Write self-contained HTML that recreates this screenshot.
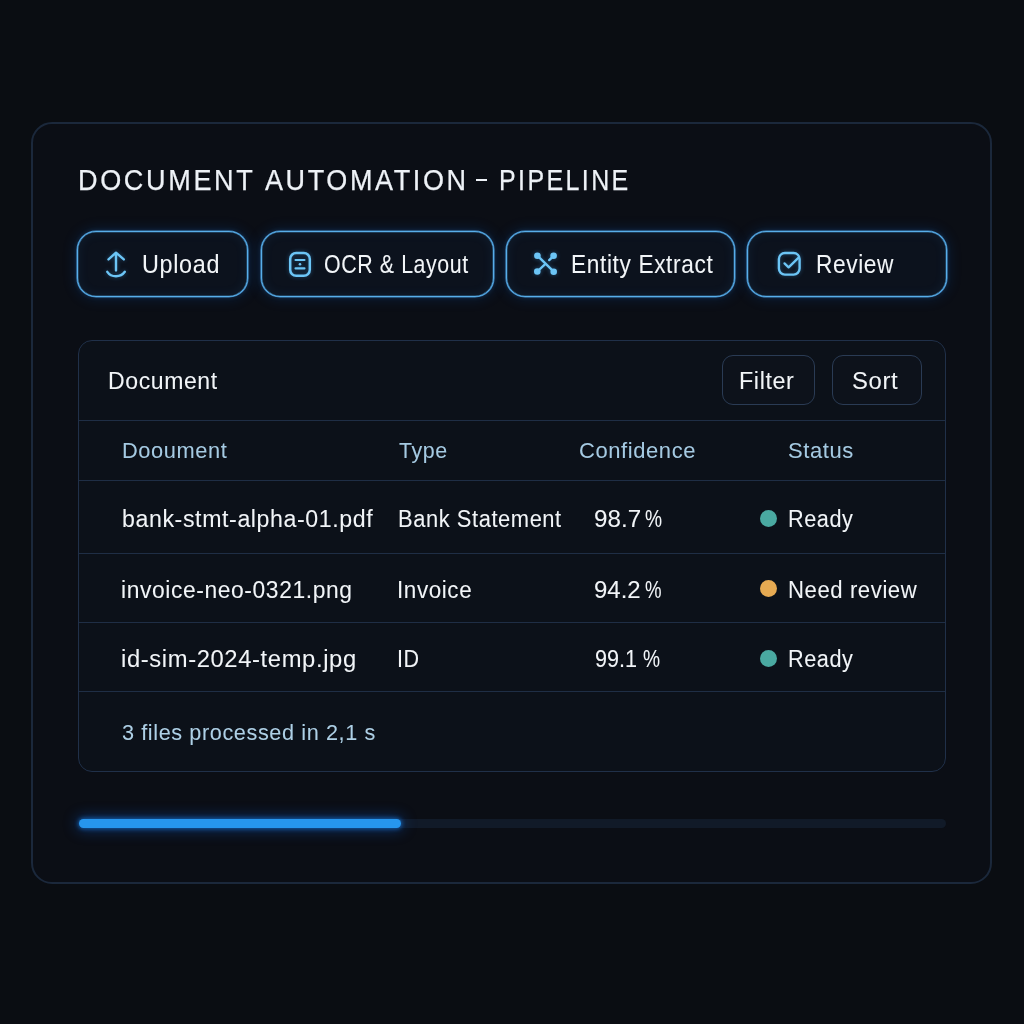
<!DOCTYPE html>
<html><head><meta charset="utf-8">
<style>
html,body{margin:0;padding:0}
body{width:1024px;height:1024px;background:#0a0d12;position:relative;overflow:hidden;font-family:"Liberation Sans",sans-serif}
.abs{position:absolute;box-sizing:border-box}
.t{position:absolute;white-space:nowrap;line-height:1;transform-origin:0 0;-webkit-text-stroke:0.05px currentColor}
#t1,#t2,#t3{-webkit-text-stroke:0.25px currentColor}
.card{left:31px;top:122px;width:961px;height:762px;border:2px solid #1b283b;border-radius:21px;background:#0b0e15}
.btn{top:231px;height:66px;border:1px solid #58aeea;border-radius:19px;background:#0c121d;box-shadow:0 0 0 0.6px rgba(85,175,240,0.75), 0 0 5px 0 rgba(50,150,240,0.24), 0 0 14px 2px rgba(20,100,210,0.16), inset 0 0 0 0.5px rgba(85,175,240,0.5), inset 0 0 12px rgba(60,150,240,0.10)}
.tbl{left:78px;top:340px;width:868px;height:432px;border:1px solid #203049;border-radius:14px;background:#0c1119}
.sep{left:79px;width:866px;height:1px;background:#1f2e45}
.sbtn{top:355px;height:50px;border:1px solid #2a3b54;border-radius:11px;background:#0d121b}
.dot{width:17px;height:17px;border-radius:50%}
.track{left:79px;top:819px;width:867px;height:9px;border-radius:5px;background:#111a28}
.fill{left:79px;top:819px;width:322px;height:9px;border-radius:5px;background:#2696ee;box-shadow:0 0 4px 1px rgba(30,140,250,0.55),0 0 14px 3px rgba(15,100,230,0.35)}
</style></head><body>
<div class="abs card"></div>
<div class="abs btn" style="left:77px;width:171px"></div>
<div class="abs btn" style="left:261px;width:233px"></div>
<div class="abs btn" style="left:506px;width:229px"></div>
<div class="abs btn" style="left:747px;width:200px"></div>
<div class="abs tbl"></div>
<div class="abs sbtn" style="left:722px;width:93px"></div>
<div class="abs sbtn" style="left:832px;width:90px"></div>
<div class="abs sep" style="top:420px"></div>
<div class="abs sep" style="top:480px"></div>
<div class="abs sep" style="top:553px"></div>
<div class="abs sep" style="top:622px"></div>
<div class="abs sep" style="top:691px"></div>
<div class="abs dot" style="left:760px;top:510px;background:#4aa9a1"></div>
<div class="abs dot" style="left:760px;top:580px;background:#e6aa52"></div>
<div class="abs dot" style="left:760px;top:650px;background:#4aa9a1"></div>
<div class="abs track"></div>
<div class="abs fill"></div>
<svg class="abs" style="left:0;top:0;filter:drop-shadow(0 0 2px rgba(70,170,245,0.4))" width="1024" height="1024" viewBox="0 0 1024 1024" fill="none" stroke="#6cc5f6" stroke-linecap="round" stroke-linejoin="round">
<path stroke-width="2.4" d="M108.5 259.4 L116 252.7 L123.8 259.4 M116 253.2 V270.4 M107.3 271.8 C109.8 275.5 112.4 276.2 116 276.2 C119.6 276.2 122.2 275.5 124.8 271.8"/>
<rect x="290.2" y="253" width="19.6" height="22.8" rx="6" stroke-width="2.5"/>
<path stroke-width="2.1" d="M295.5 260 H304.5 M295.5 268.4 H304.5"/>
<circle cx="300" cy="264.3" r="1.3" fill="#6cc5f6" stroke="none"/>
<path stroke-width="2.4" d="M537.4 255.7 L553.7 271.7 M553.6 255.8 L549.2 260.1 M544.4 264.8 L537.3 271.5"/>
<circle cx="537.4" cy="255.7" r="3.3" fill="#6cc5f6" stroke="none"/>
<circle cx="553.6" cy="255.8" r="3.3" fill="#6cc5f6" stroke="none"/>
<circle cx="537.3" cy="271.5" r="3.3" fill="#6cc5f6" stroke="none"/>
<circle cx="553.7" cy="271.7" r="3.3" fill="#6cc5f6" stroke="none"/>
<rect x="778.9" y="253" width="20.7" height="21.6" rx="6" stroke-width="2.4"/>
<path stroke-width="2.3" d="M784.5 263.4 L788.6 267.3 L798.6 257.6"/>
</svg>
<div class="abs" style="left:476px;top:178.8px;width:11.3px;height:2.7px;background:#eef2f7"></div>
<div class="t m" id="t1" style="left:78.30px;top:165.10px;font-size:30px;color:#eef2f7;letter-spacing:2.9px;transform:scaleX(0.9027)">DOCUMENT</div>
<div class="t m" id="t2" style="left:264.86px;top:165.10px;font-size:30px;color:#eef2f7;letter-spacing:2.9px;transform:scaleX(0.9000)">AUTOMATION</div>
<div class="t m" id="t3" style="left:498.62px;top:165.10px;font-size:30px;color:#eef2f7;letter-spacing:2.9px;transform:scaleX(0.8318)">PIPELINE</div>
<div class="t m" id="b1" style="left:142.30px;top:251.64px;font-size:25px;color:#f2f5f8;letter-spacing:0.7px;transform:scaleX(0.9359)">Upload</div>
<div class="t m" id="b2" style="left:323.52px;top:251.64px;font-size:25px;color:#f2f5f8;letter-spacing:0.7px;transform:scaleX(0.8541)">OCR &amp; Layout</div>
<div class="t m" id="b3" style="left:571.02px;top:251.64px;font-size:25px;color:#f2f5f8;letter-spacing:0.7px;transform:scaleX(0.9064)">Entity Extract</div>
<div class="t m" id="b4" style="left:816.00px;top:251.64px;font-size:25px;color:#f2f5f8;letter-spacing:0.7px;transform:scaleX(0.9061)">Review</div>
<div class="t m" id="doc" style="left:108.27px;top:370.11px;font-size:23.5px;color:#f2f5f8;letter-spacing:0.6px;transform:scaleX(0.9808)">Document</div>
<div class="t m" id="filter" style="left:739.25px;top:369.91px;font-size:23.5px;color:#f2f5f8;letter-spacing:0.6px;transform:scaleX(0.9929)">Filter</div>
<div class="t m" id="sort" style="left:851.90px;top:369.91px;font-size:23.5px;color:#f2f5f8;letter-spacing:0.6px;transform:scaleX(1.0152)">Sort</div>
<div class="t m" id="h1" style="left:121.50px;top:440.48px;font-size:22px;color:#a5cae2;letter-spacing:0.6px;transform:scaleX(0.9922)">Dooument</div>
<div class="t m" id="h2" style="left:399.46px;top:440.48px;font-size:22px;color:#a5cae2;letter-spacing:0.6px;transform:scaleX(0.9741)">Type</div>
<div class="t m" id="h3" style="left:578.62px;top:440.48px;font-size:22px;color:#a5cae2;letter-spacing:0.6px;transform:scaleX(0.9976)">Confidence</div>
<div class="t m" id="h4" style="left:788.09px;top:440.48px;font-size:22px;color:#a5cae2;letter-spacing:0.6px;transform:scaleX(0.9997)">Status</div>
<div class="t m" id="r1a" style="left:121.97px;top:508.03px;font-size:23px;color:#f2f5f8;letter-spacing:0.6px;transform:scaleX(1.0065)">bank-stmt-alpha-01.pdf</div>
<div class="t m" id="r1b" style="left:398.22px;top:508.03px;font-size:23px;color:#f2f5f8;letter-spacing:0.6px;transform:scaleX(0.9519)">Bank Statement</div>
<div class="t m" id="r1c" style="left:594.02px;top:508.03px;font-size:23px;color:#f2f5f8;letter-spacing:0px;transform:scaleX(1.0520)">98.7</div>
<div class="t m" id="r1p" style="left:645.42px;top:508.03px;font-size:23px;color:#f2f5f8;letter-spacing:0px;transform:scaleX(0.8335)">%</div>
<div class="t m" id="r1d" style="left:787.87px;top:508.03px;font-size:23px;color:#f2f5f8;letter-spacing:0.6px;transform:scaleX(0.9422)">Ready</div>
<div class="t m" id="r2a" style="left:120.98px;top:578.83px;font-size:23px;color:#f2f5f8;letter-spacing:0.6px;transform:scaleX(0.9930)">invoice-neo-0321.png</div>
<div class="t m" id="r2b" style="left:397.00px;top:578.83px;font-size:23px;color:#f2f5f8;letter-spacing:0.6px;transform:scaleX(0.9761)">Invoice</div>
<div class="t m" id="r2c" style="left:594.06px;top:578.83px;font-size:23px;color:#f2f5f8;letter-spacing:0px;transform:scaleX(1.0416)">94.2</div>
<div class="t m" id="r2p" style="left:645.02px;top:578.83px;font-size:23px;color:#f2f5f8;letter-spacing:0px;transform:scaleX(0.8085)">%</div>
<div class="t m" id="r2d" style="left:787.64px;top:578.83px;font-size:23px;color:#f2f5f8;letter-spacing:0.6px;transform:scaleX(0.9618)">Need review</div>
<div class="t m" id="r3a" style="left:120.61px;top:648.03px;font-size:23px;color:#f2f5f8;letter-spacing:0.6px;transform:scaleX(1.0340)">id-sim-2024-temp.jpg</div>
<div class="t m" id="r3b" style="left:397.40px;top:648.03px;font-size:23px;color:#f2f5f8;letter-spacing:0.6px;transform:scaleX(0.9360)">ID</div>
<div class="t m" id="r3c" style="left:594.61px;top:648.03px;font-size:23px;color:#f2f5f8;letter-spacing:0px;transform:scaleX(0.9382)">99.1</div>
<div class="t m" id="r3p" style="left:643.29px;top:648.03px;font-size:23px;color:#f2f5f8;letter-spacing:0px;transform:scaleX(0.8335)">%</div>
<div class="t m" id="r3d" style="left:787.87px;top:648.03px;font-size:23px;color:#f2f5f8;letter-spacing:0.6px;transform:scaleX(0.9422)">Ready</div>
<div class="t m" id="foot" style="left:121.63px;top:721.88px;font-size:22px;color:#aed0e6;letter-spacing:0.6px;transform:scaleX(0.9848)">3 files processed in 2,1 s</div>
</body></html>
